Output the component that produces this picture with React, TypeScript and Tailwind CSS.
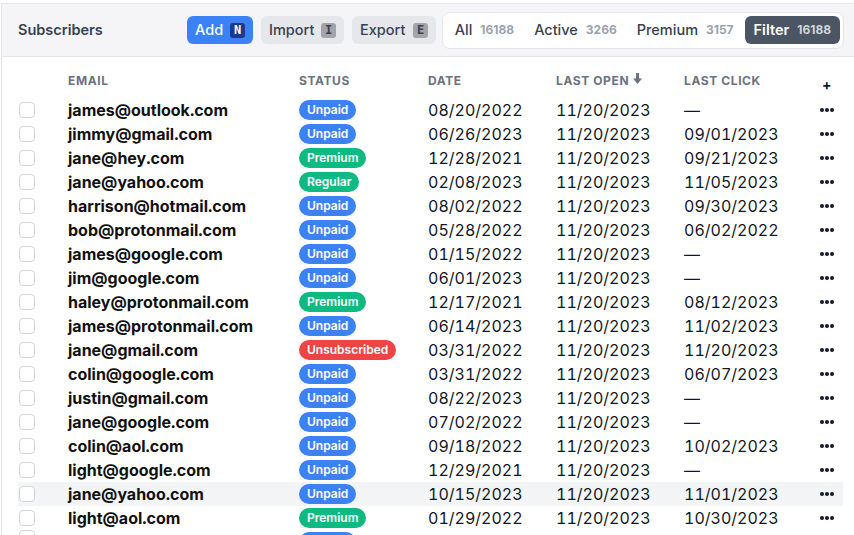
type Status = "Unpaid" | "Premium" | "Regular" | "Unsubscribed";

type Row = {
  email: string;
  status: Status;
  date: string;
  lastOpen: string;
  lastClick: string;
};

const rows: Row[] = [
  { email: "james@outlook.com", status: "Unpaid", date: "08/20/2022", lastOpen: "11/20/2023", lastClick: "—" },
  { email: "jimmy@gmail.com", status: "Unpaid", date: "06/26/2023", lastOpen: "11/20/2023", lastClick: "09/01/2023" },
  { email: "jane@hey.com", status: "Premium", date: "12/28/2021", lastOpen: "11/20/2023", lastClick: "09/21/2023" },
  { email: "jane@yahoo.com", status: "Regular", date: "02/08/2023", lastOpen: "11/20/2023", lastClick: "11/05/2023" },
  { email: "harrison@hotmail.com", status: "Unpaid", date: "08/02/2022", lastOpen: "11/20/2023", lastClick: "09/30/2023" },
  { email: "bob@protonmail.com", status: "Unpaid", date: "05/28/2022", lastOpen: "11/20/2023", lastClick: "06/02/2022" },
  { email: "james@google.com", status: "Unpaid", date: "01/15/2022", lastOpen: "11/20/2023", lastClick: "—" },
  { email: "jim@google.com", status: "Unpaid", date: "06/01/2023", lastOpen: "11/20/2023", lastClick: "—" },
  { email: "haley@protonmail.com", status: "Premium", date: "12/17/2021", lastOpen: "11/20/2023", lastClick: "08/12/2023" },
  { email: "james@protonmail.com", status: "Unpaid", date: "06/14/2023", lastOpen: "11/20/2023", lastClick: "11/02/2023" },
  { email: "jane@gmail.com", status: "Unsubscribed", date: "03/31/2022", lastOpen: "11/20/2023", lastClick: "11/20/2023" },
  { email: "colin@google.com", status: "Unpaid", date: "03/31/2022", lastOpen: "11/20/2023", lastClick: "06/07/2023" },
  { email: "justin@gmail.com", status: "Unpaid", date: "08/22/2023", lastOpen: "11/20/2023", lastClick: "—" },
  { email: "jane@google.com", status: "Unpaid", date: "07/02/2022", lastOpen: "11/20/2023", lastClick: "—" },
  { email: "colin@aol.com", status: "Unpaid", date: "09/18/2022", lastOpen: "11/20/2023", lastClick: "10/02/2023" },
  { email: "light@google.com", status: "Unpaid", date: "12/29/2021", lastOpen: "11/20/2023", lastClick: "—" },
  { email: "jane@yahoo.com", status: "Unpaid", date: "10/15/2023", lastOpen: "11/20/2023", lastClick: "11/01/2023" },
  { email: "light@aol.com", status: "Premium", date: "01/29/2022", lastOpen: "11/20/2023", lastClick: "10/30/2023" },
];

const badgeColor: Record<Status, string> = {
  Unpaid: "bg-[#3b82f6]",
  Premium: "bg-[#10b981]",
  Regular: "bg-[#10b981]",
  Unsubscribed: "bg-[#ef4444]",
};

const cols = "grid grid-cols-[50px_231px_129px_128px_128px_127px_32px]";

const Kbd = ({ children, dark }: { children: string; dark?: boolean }) => (
  <span
    className={
      "flex h-[15px] w-[15px] items-center justify-center rounded-[3px] text-[12px] font-bold font-['DejaVu_Sans_Mono',monospace] " +
      (dark ? "bg-[#1e3a8a] text-white" : "bg-[#a3a3a8] text-[#374151]")
    }
  >
    {children}
  </span>
);

const Dots = () => (
  <svg width="14" height="4" viewBox="0 0 14 4" className="mx-auto">
    <circle cx="2" cy="2" r="2" fill="#111827" />
    <circle cx="7" cy="2" r="2" fill="#111827" />
    <circle cx="12" cy="2" r="2" fill="#111827" />
  </svg>
);

const SortArrow = () => (
  <svg width="9" height="11" viewBox="0 0 9 11" className="ml-1 inline-block">
    <rect x="3" y="0" width="3" height="6" fill="#6b7280" />
    <path d="M0 5.5 L9 5.5 L4.5 11 Z" fill="#6b7280" />
  </svg>
);

const Header = () => (
  <div className="flex h-[53px] items-center border-b border-[#e5e7eb] bg-[#f5f5f7] pl-4 pr-[10px]">
    <div className="w-[169px] shrink-0 text-[14.5px] font-semibold text-[#374151]">Subscribers</div>
    <div className="flex shrink-0 items-center gap-2">
      <button className="flex h-7 w-[66px] items-center justify-between rounded-md bg-[#3b82f6] px-2 text-[14.5px] font-medium text-white">
        Add <Kbd dark>N</Kbd>
      </button>
      <button className="flex h-7 w-[83px] items-center justify-between rounded-md bg-[#e5e7eb] px-2 text-[14.5px] font-medium text-[#374151]">
        Import <Kbd>I</Kbd>
      </button>
      <button className="flex h-7 w-[84px] items-center justify-between rounded-md bg-[#e5e7eb] px-2 text-[14.5px] font-medium text-[#374151]">
        Export <Kbd>E</Kbd>
      </button>
    </div>
    <div className="ml-auto flex h-[37px] items-center gap-0.5 rounded-lg border border-[#e5e7eb] bg-white px-[3px]">
      {[
        ["All", "16188"],
        ["Active", "3266"],
        ["Premium", "3157"],
      ].map(([label, n]) => (
        <div key={label} className="flex h-7 items-center px-[9px] text-[14.5px] font-medium text-[#374151]">
          {label}
          <span className="ml-2 text-xs font-bold text-[#9ca3af]">{n}</span>
        </div>
      ))}
      <div className="flex h-7 items-center rounded-md bg-[#4b5563] px-[9px] text-[14.5px] font-semibold text-white">
        Filter
        <span className="ml-2 text-xs font-bold text-[#d1d5db]">16188</span>
      </div>
    </div>
  </div>
);

export default function App() {
  return (
    <div className="h-[535px] w-[854px] overflow-hidden bg-white pt-[3px] font-['Inter',sans-serif]">
      <div className="ml-px h-full border-l border-t border-[#e5e7eb]">
        <Header />
        <div className="pl-4 pr-[11px]">
          <div className={cols + " h-[41px] pt-4 text-xs font-bold uppercase tracking-wider text-[#6b7280]"}>
            <div />
            <div>Email</div>
            <div>Status</div>
            <div>Date</div>
            <div className="flex items-start">
              Last Open
              <SortArrow />
            </div>
            <div>Last Click</div>
            <div className="pt-0.5 text-center text-sm font-bold text-[#111827]">+</div>
          </div>
          {rows.map((r, i) => (
            <div
              key={i}
              className={cols + " h-6 items-center text-base leading-6 tabular-nums text-[#111827]" + (i === 16 ? " bg-[#f3f4f6]" : "")}
            >
              <div className="pl-px">
                <span className="block h-4 w-4 rounded border border-[#d1d5db] bg-white" />
              </div>
              <div className="font-bold text-[#111]">{r.email}</div>
              <div className="flex h-6 items-center">
                <span className={"flex h-5 items-center rounded-full px-2 text-xs font-semibold leading-none text-white " + badgeColor[r.status]}>
                  {r.status}
                </span>
              </div>
              <div>{r.date}</div>
              <div>{r.lastOpen}</div>
              <div>{r.lastClick}</div>
              <div className="flex items-center">
                <Dots />
              </div>
            </div>
          ))}
          <div className={cols + " h-6 items-start"}>
            <div className="pl-px">
              <span className="block h-4 w-4 rounded border border-[#d1d5db] bg-white" />
            </div>
            <div />
            <div className="pt-[2px]">
              <span className="block h-5 w-[57px] rounded-full bg-[#3b82f6]" />
            </div>
          </div>
        </div>
      </div>
    </div>
  );
}
